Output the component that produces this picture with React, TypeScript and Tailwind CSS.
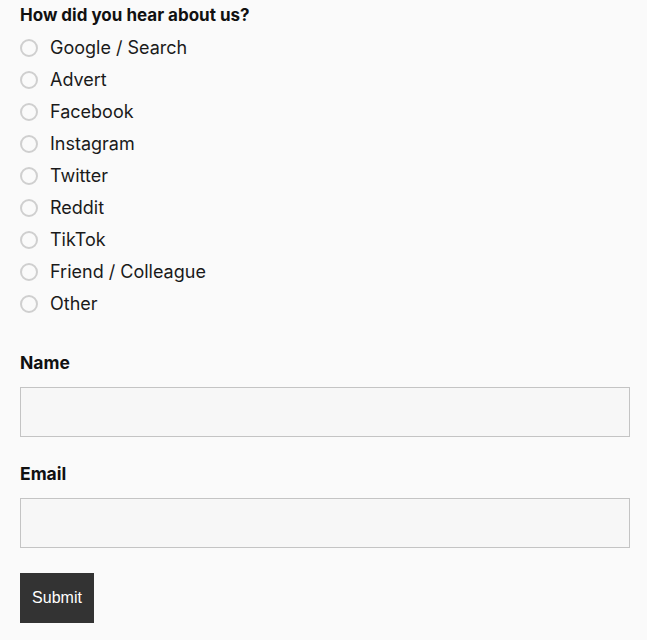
const options = [
  "Google / Search",
  "Advert",
  "Facebook",
  "Instagram",
  "Twitter",
  "Reddit",
  "TikTok",
  "Friend / Colleague",
  "Other",
];

export default function App() {
  return (
    <div className="min-h-screen bg-[#fafafa] pt-[3px] pr-[17px] pl-5 text-[#111] [font-family:Inter,'Noto_Sans',sans-serif]">
      <form onSubmit={(e) => e.preventDefault()}>
        <fieldset>
          <legend className="text-[17px] leading-6 font-bold">How did you hear about us?</legend>
          <div className="mt-[5px] flex flex-col">
            {options.map((opt) => (
              <label key={opt} className="flex h-8 cursor-pointer items-center gap-3 text-lg text-[#1a1a1a]">
                <input type="radio" name="source" className="peer sr-only" />
                <span className="h-[18px] w-[18px] shrink-0 rounded-full border-2 border-[#cfcfcf] bg-[#fafafa]" />
                <span>{opt}</span>
              </label>
            ))}
          </div>
        </fieldset>

        <label className="mt-[31px] block">
          <span className="block text-[17.5px] leading-6 font-bold">Name</span>
          <input
            type="text"
            className="mt-3 block h-[50px] w-full border border-[#c4c4c4] bg-[#f7f7f7] px-3 outline-none"
          />
        </label>

        <label className="mt-[25px] block">
          <span className="block text-[17.5px] leading-6 font-bold">Email</span>
          <input
            type="email"
            className="mt-3 block h-[50px] w-full border border-[#c4c4c4] bg-[#f7f7f7] px-3 outline-none"
          />
        </label>

        <button
          type="submit"
          className="mt-[25px] h-[50px] w-[74px] bg-[#333] text-base text-white [font-family:'Liberation_Sans',Arial,sans-serif]"
        >
          Submit
        </button>
      </form>
    </div>
  );
}
